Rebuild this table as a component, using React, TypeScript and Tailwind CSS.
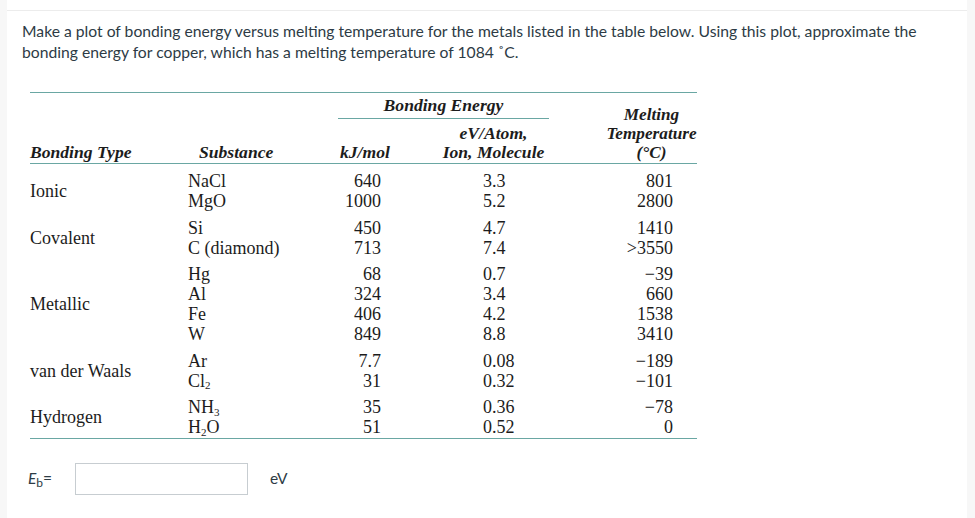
import React from 'react';

type Row = { sub: React.ReactNode; kj: string; ev: string; melt: string };
type Group = { type: string; rows: Row[] };

const groups: Group[] = [
  {
    type: 'Ionic',
    rows: [
      { sub: 'NaCl', kj: '640', ev: '3.3', melt: '801' },
      { sub: 'MgO', kj: '1000', ev: '5.2', melt: '2800' },
    ],
  },
  {
    type: 'Covalent',
    rows: [
      { sub: 'Si', kj: '450', ev: '4.7', melt: '1410' },
      { sub: 'C (diamond)', kj: '713', ev: '7.4', melt: '>3550' },
    ],
  },
  {
    type: 'Metallic',
    rows: [
      { sub: 'Hg', kj: '68', ev: '0.7', melt: '−39' },
      { sub: 'Al', kj: '324', ev: '3.4', melt: '660' },
      { sub: 'Fe', kj: '406', ev: '4.2', melt: '1538' },
      { sub: 'W', kj: '849', ev: '8.8', melt: '3410' },
    ],
  },
  {
    type: 'van der Waals',
    rows: [
      { sub: 'Ar', kj: '7.7', ev: '0.08', melt: '−189' },
      { sub: <>Cl<sub className="text-[11px] leading-none">2</sub></>, kj: '31', ev: '0.32', melt: '−101' },
    ],
  },
  {
    type: 'Hydrogen',
    rows: [
      { sub: <>NH<sub className="text-[11px] leading-none">3</sub></>, kj: '35', ev: '0.36', melt: '−78' },
      { sub: <>H<sub className="text-[11px] leading-none">2</sub>O</>, kj: '51', ev: '0.52', melt: '0' },
    ],
  },
];

export default function App() {
  return (
    <div className="flex w-[975px] h-[518px] bg-white overflow-hidden">
      <div className="w-[7px] bg-[#f7f7f7]" />
      <div className="flex-1 pt-[10px]">
        <div className="border-t border-[#ececec] pt-[10px] pl-[15px] pr-[14px]">
          <p className="font-['Lato',sans-serif] text-[15.7px] leading-[21px] text-[#2d3b45]">
            Make a plot of bonding energy versus melting temperature for the metals listed in the table below. Using this plot, approximate the bonding energy for copper, which has a melting temperature of 1084 ˚C.
          </p>

          {/* data table */}
          <div className="ml-[8px] mt-[29px] w-[667px] font-['Liberation_Serif',serif] text-[#1c1c1c] border-t border-b border-[#6aa7a3]">
            <div className="flex items-end border-b border-[#6aa7a3] pb-[1px] text-[17.6px] font-bold italic leading-[19px]">
              <div className="w-[158px]">Bonding Type</div>
              <div className="w-[150px] pl-[11px]">Substance</div>
              <div className="w-[211px] flex flex-col">
                <div className="text-center border-b border-[#6aa7a3] pt-[3px] pb-[3px]">Bonding Energy</div>
                <div className="flex items-end pt-[5px]">
                  <div className="w-[100px] pl-[2px]">kJ/mol</div>
                  <div className="flex-1 text-center">
                    eV/Atom,<br />Ion, Molecule
                  </div>
                </div>
              </div>
              <div className="w-[57px]" />
              <div className="w-[91px] text-center text-[17.2px] leading-[19px] whitespace-nowrap">
                Melting<br />Temperature<br />(°C)
              </div>
            </div>

            <div className="flex flex-col gap-[6.5px] pt-[7px] pb-[1px] text-[18px] leading-[20px]">
              {groups.map((g) => (
                <div key={g.type} className="flex">
                  <div className="w-[158px] flex items-center">{g.type}</div>
                  <div className="flex flex-col">
                    {g.rows.map((r, i) => (
                      <div key={i} className="flex h-[20px] whitespace-nowrap">
                        <div className="w-[135px]">{r.sub}</div>
                        <div className="w-[58px] text-right">{r.kj}</div>
                        <div className="w-[102px]" />
                        <div className="w-[80px]">{r.ev}</div>
                        <div className="w-[110px] text-right">{r.melt}</div>
                      </div>
                    ))}
                  </div>
                </div>
              ))}
            </div>
          </div>

          {/* answer */}
          <div className="flex items-center mt-[24px] ml-[6px] font-['Lato',sans-serif] text-[15.5px] text-[#2d3b45]">
            <div className="w-[47px]">
              <i>E</i>
              <sub className="text-[12px]">b</sub>=
            </div>
            <input type="text" className="w-[173px] h-[32px] border border-[#c7cdd1] bg-white outline-none" />
            <div className="ml-[22px]">eV</div>
          </div>
        </div>
      </div>
      <div className="w-[8px] bg-[#f7f7f7]" />
    </div>
  );
}
